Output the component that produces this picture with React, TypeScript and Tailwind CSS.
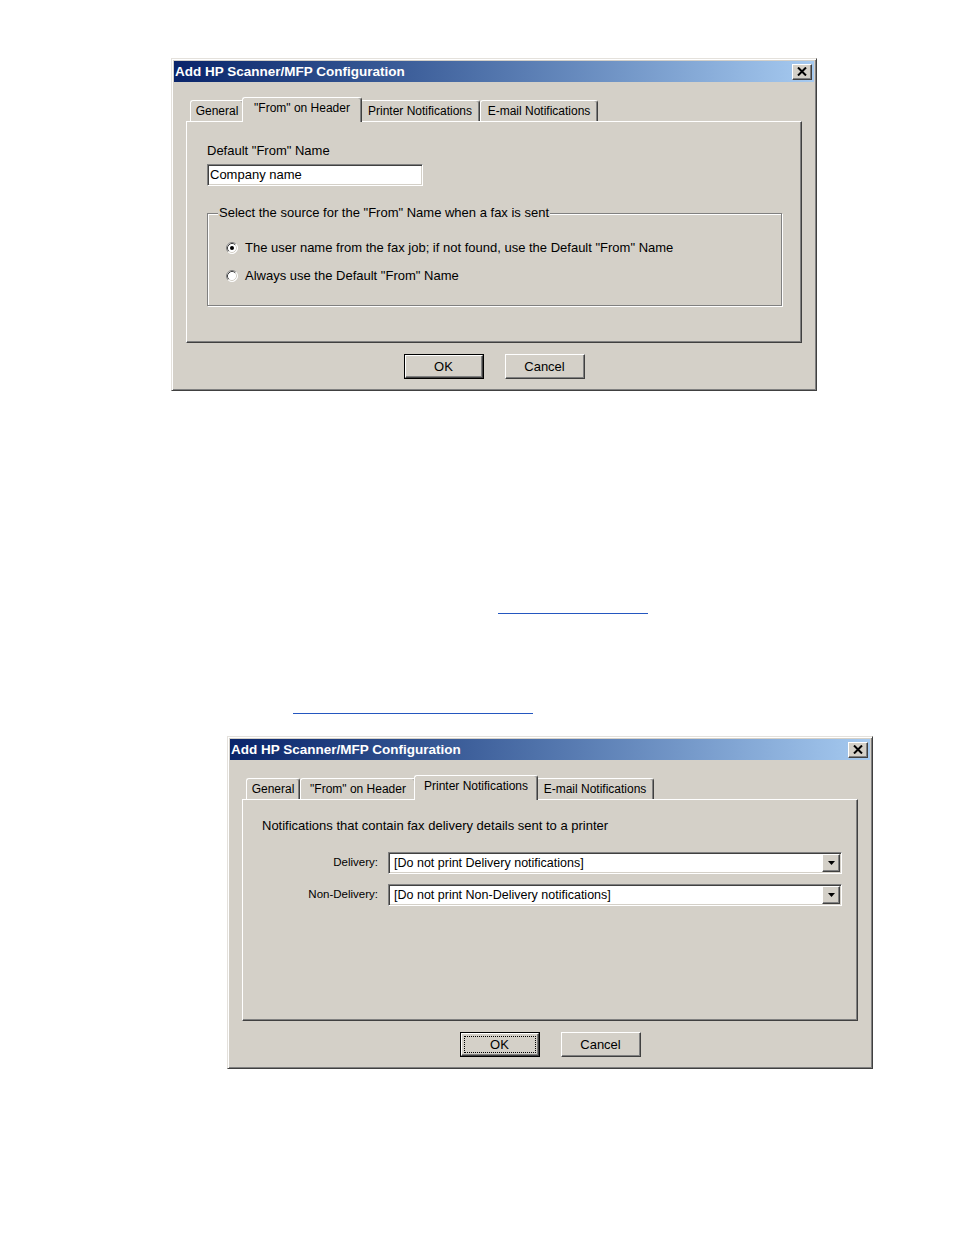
import React from "react";

// classic 3D edges
const raised =
  "border border-t-white border-l-white border-r-[#404040] border-b-[#404040] shadow-[inset_-1px_-1px_0_#808080]";
const sunken =
  "border border-t-[#808080] border-l-[#808080] border-r-white border-b-white shadow-[inset_1px_1px_0_#404040,inset_-1px_-1px_0_#d4d0c8]";

const CloseIcon = () => (
  <svg width="10" height="9" viewBox="0 0 10 9">
    <path d="M1 0.5 L9 8.5 M9 0.5 L1 8.5" stroke="black" strokeWidth="2" />
  </svg>
);

const Radio = ({ checked }: { checked?: boolean }) => (
  <svg width="12" height="12" viewBox="0 0 12 12" className="shrink-0">
    <circle cx="6" cy="6" r="5.5" fill="white" />
    <path d="M2.11 9.89 A5.5 5.5 0 0 1 9.89 2.11" stroke="#808080" fill="none" />
    <path d="M9.89 2.11 A5.5 5.5 0 0 1 2.11 9.89" stroke="white" fill="none" />
    <path d="M2.82 9.18 A4.5 4.5 0 0 1 9.18 2.82" stroke="#404040" fill="none" />
    <path d="M9.18 2.82 A4.5 4.5 0 0 1 2.82 9.18" stroke="#d4d0c8" fill="none" />
    {checked && <circle cx="6" cy="6" r="2" fill="black" />}
  </svg>
);

const Button = ({
  label,
  isDefault,
  focused,
}: {
  label: string;
  isDefault?: boolean;
  focused?: boolean;
}) => (
  <div
    className={`w-[80px] h-[25px] ${isDefault ? "border border-black" : ""}`}
  >
    <div
      className={`h-full flex items-center justify-center text-[13px] ${raised} ${
        focused
          ? "outline outline-1 outline-dotted outline-black outline-offset-[-4px]"
          : ""
      }`}
    >
      {label}
    </div>
  </div>
);

const tabWidths = [54, 116, 120, 118];

const Dialog = ({
  tabs,
  selected,
  focusOk,
  children,
}: {
  tabs: string[];
  selected: number;
  focusOk?: boolean;
  children: React.ReactNode;
}) => (
  <div className="w-[646px] h-[333px] bg-[#d4d0c8] p-[2px] border border-t-[#e4e1dc] border-l-[#e4e1dc] border-r-[#404040] border-b-[#404040] shadow-[inset_1px_1px_0_white,inset_-1px_-1px_0_#808080] text-black">
    {/* title bar */}
    <div className="h-[21px] flex items-center justify-between bg-gradient-to-r from-[#0a246a] to-[#a6caf0]">
      <span className="pl-[1px] text-white font-bold text-[13.5px] leading-none">
        Add HP Scanner/MFP Configuration
      </span>
      <div
        className={`mr-[2px] w-[20px] h-[16px] bg-[#d4d0c8] flex items-center justify-center ${raised}`}
      >
        <CloseIcon />
      </div>
    </div>

    <div className="px-[12px]">
      {/* tabs */}
      <div className="mt-[15px] h-[24px] flex items-end pl-[4px]">
        {tabs.map((t, i) => {
          const sel = i === selected;
          return (
            <div
              key={t}
              style={{ width: tabWidths[i] + (sel ? 4 : 0) }}
              className={`rounded-t-[3px] bg-[#d4d0c8] border-t border-l border-r border-t-white border-l-white border-r-[#404040] shadow-[inset_-1px_0_0_#808080] text-[12px] leading-none flex justify-center ${
                sel
                  ? "relative z-10 h-[25px] -mx-[2px] -mb-px pt-[4px]"
                  : "h-[21px] pt-[4px]"
              }`}
            >
              {t}
            </div>
          );
        })}
      </div>
      {/* panel */}
      <div className={`h-[222px] ${raised}`}>{children}</div>

      {/* buttons */}
      <div className="mt-[11px] flex justify-center gap-[21px]">
        <Button label="OK" isDefault focused={focusOk} />
        <Button label="Cancel" />
      </div>
    </div>
  </div>
);

const Select = ({ value }: { value: string }) => (
  <div
    className={`w-[454px] h-[22px] bg-white flex items-center justify-between pl-[5px] pr-[1px] ${sunken}`}
  >
    <span className="text-[12.5px] leading-none">{value}</span>
    <div
      className={`w-[18px] h-[18px] bg-[#d4d0c8] flex items-center justify-center ${raised}`}
    >
      <svg width="7" height="4" viewBox="0 0 7 4">
        <path d="M0 0 H7 L3.5 4 Z" fill="black" />
      </svg>
    </div>
  </div>
);

const TABS = [
  "General",
  '"From" on Header',
  "Printer Notifications",
  "E-mail Notifications",
];

export default function App() {
  return (
    <div className="w-[954px] h-[1235px] bg-white font-['Liberation_Sans',Arial,sans-serif] overflow-hidden">
      <div className="pt-[58px] pl-[171px]">
        <Dialog tabs={TABS} selected={1}>
          <div className="pl-[20px] pt-[22px]">
            <div className="text-[13px] leading-[14px]">
              Default &quot;From&quot; Name
            </div>
            <div
              className={`mt-[6px] w-[216px] h-[22px] bg-white flex items-center pl-[2px] text-[13px] ${sunken}`}
            >
              Company name
            </div>
            <fieldset className="mt-[20px] w-[575px] h-[100px] border border-[#808080] shadow-[inset_1px_1px_0_white,1px_1px_0_white]">
              <legend className="ml-[10px] px-[1px] text-[13px] leading-[14px] bg-[#d4d0c8]">
                Select the source for the &quot;From&quot; Name when a fax is
                sent
              </legend>
              <div className="pl-[18px] pt-[21px] flex flex-col gap-[14px]">
                <div className="flex items-center gap-[7px] text-[13px] leading-[14px]">
                  <Radio checked />
                  The user name from the fax job; if not found, use the Default
                  &quot;From&quot; Name
                </div>
                <div className="flex items-center gap-[7px] text-[13px] leading-[14px]">
                  <Radio />
                  Always use the Default &quot;From&quot; Name
                </div>
              </div>
            </fieldset>
          </div>
        </Dialog>
      </div>

      <div className="mt-[222px] ml-[498px] w-[150px] h-px bg-[#2457c0]" />
      <div className="mt-[99px] ml-[293px] w-[240px] h-px bg-[#2457c0]" />

      <div className="mt-[22px] pl-[227px]">
        <Dialog tabs={TABS} selected={2} focusOk>
          <div className="pt-[19px]">
            <div className="pl-[19px] text-[13px] leading-[14px]">
              Notifications that contain fax delivery details sent to a printer
            </div>
            <div className="mt-[19px] flex items-center">
              <div className="w-[136px] text-right text-[11.5px] pr-px">
                Delivery:
              </div>
              <div className="ml-[9px]">
                <Select value="[Do not print Delivery notifications]" />
              </div>
            </div>
            <div className="mt-[10px] flex items-center">
              <div className="w-[136px] text-right text-[11.5px] pr-px">
                Non-Delivery:
              </div>
              <div className="ml-[9px]">
                <Select value="[Do not print Non-Delivery notifications]" />
              </div>
            </div>
          </div>
        </Dialog>
      </div>
    </div>
  );
}
